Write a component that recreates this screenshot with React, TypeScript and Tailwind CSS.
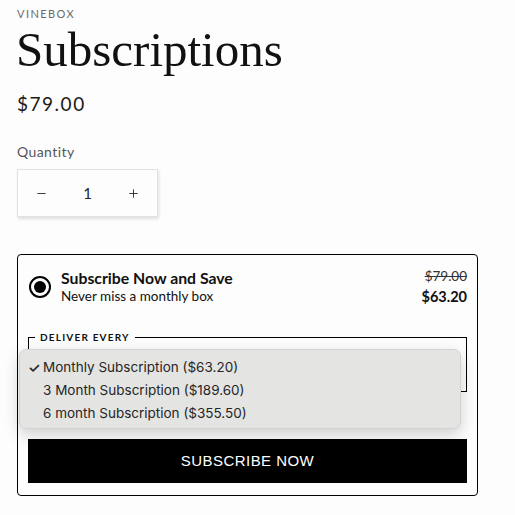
import { Minus, Plus } from "lucide-react";

const options = [
  { label: "Monthly Subscription ($63.20)", checked: true },
  { label: "3 Month Subscription ($189.60)", checked: false },
  { label: "6 month Subscription ($355.50)", checked: false },
];

const cardFont = { fontFamily: "Lato, 'Open Sans', sans-serif" };

export default function App() {
  return (
    <div className="min-h-screen w-full bg-[#fdfdfd] pl-[17px] pt-[7px]" style={{ fontFamily: "Lato, 'Noto Sans', sans-serif" }}>
      <div className="w-[461px] flex flex-col">
        <div className="text-[11px] leading-[14px] tracking-[0.13em] text-[#6b6b6b]">VINEBOX</div>
        <h1
          className="mt-[1px] text-[49px] leading-[56px] text-[#111] -ml-[1px]"
          style={{ fontFamily: "'Liberation Serif', 'DejaVu Serif', serif" }}
        >
          Subscriptions
        </h1>
        <div className="mt-[14px] text-[19px] leading-[24px] tracking-[0.08em] text-[#1a1a1a]">$79.00</div>

        <div className="mt-[27px] text-[14px] leading-[18px] tracking-[0.03em] text-[#555]">Quantity</div>
        <div className="mt-[8px] flex h-[48px] w-[141px] items-center justify-between border border-[#e2e2e2] bg-[#fdfdfd] px-[17px] shadow-[1px_2px_3px_rgba(0,0,0,0.12)]">
          <Minus className="h-[13px] w-[13px] text-[#222]" strokeWidth={1.6} />
          <span className="text-[15px] text-[#222]">1</span>
          <Plus className="h-[13px] w-[13px] text-[#222]" strokeWidth={1.6} />
        </div>

        <div className="relative mt-[37px] h-[242px] rounded-[4px] border border-black bg-[#fdfdfd] px-[10px] pt-[13px]" style={cardFont}>
          <div className="flex items-start justify-between">
            <div className="flex items-center gap-[10px] pl-[1px]">
              <div className="flex h-[22px] w-[22px] items-center justify-center rounded-full border-[2px] border-black">
                <div className="h-[12px] w-[12px] rounded-full bg-black" />
              </div>
              <div className="flex flex-col">
                <span className="text-[15.8px] font-bold leading-[19px] text-[#111]">Subscribe Now and Save</span>
                <span className="mt-[1px] text-[13.5px] leading-[17px] text-[#111]">Never miss a monthly box</span>
              </div>
            </div>
            <div className="flex flex-col items-end">
              <span className="text-[13.5px] leading-[17px] text-[#333] line-through">$79.00</span>
              <span className="mt-[2px] text-[14.5px] font-bold leading-[19px] text-[#111]">$63.20</span>
            </div>
          </div>

          <fieldset className="mt-[26px] h-[60px] border border-black px-[6px]">
            <legend className="px-[5px] text-[10px] font-bold leading-[10px] tracking-[0.12em] text-[#111]">DELIVER EVERY</legend>
          </fieldset>

          <button
            className="mt-[47px] flex h-[44px] w-full items-center justify-center bg-black text-[15px] tracking-[0.03em] text-white"
            style={{ fontFamily: "'Liberation Sans', Arial, sans-serif" }}
          >
            SUBSCRIBE NOW
          </button>

          <div
            className="absolute left-[1px] top-[94px] flex h-[80px] w-[442px] flex-col rounded-[7px] border border-[#d2d2d0] bg-[#e4e4e2] pt-[6px] shadow-[0_6px_16px_rgba(0,0,0,0.18)]"
            style={{ fontFamily: "Inter, 'Liberation Sans', sans-serif" }}
          >
            {options.map((o) => (
              <div key={o.label} className="flex h-[23px] shrink-0 items-center text-[13.5px] text-[#262626]">
                <span className="w-[23px] pl-[8px] text-[14px] font-semibold">{o.checked ? "✓" : ""}</span>
                <span>{o.label}</span>
              </div>
            ))}
          </div>
        </div>
      </div>
    </div>
  );
}
